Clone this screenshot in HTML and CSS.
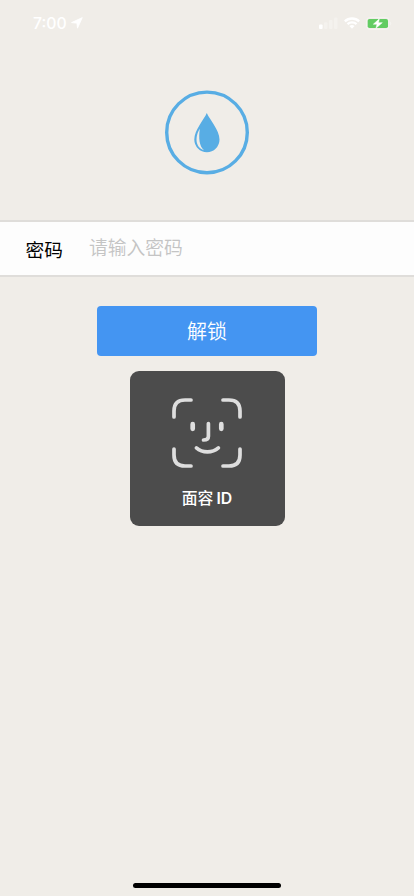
FILE: index.html
```html
<!DOCTYPE html>
<html lang="zh-CN">
<head>
<meta charset="utf-8">
<meta name="viewport" content="width=device-width, initial-scale=1">
<title>解锁</title>
<link rel="stylesheet" href="styles.css">
</head>
<body>
<div class="screen">
  <header class="status">
    <div class="clock"><span>7:00</span>
      <svg class="arrow" width="12" height="12" viewBox="0 0 12 12"><path d="M11.3.6 6.5 11.2 5.9 6.2.5 5.6z" fill="#fff" stroke="#fff" stroke-width=".8" stroke-linejoin="round"/></svg>
    </div>
    <div class="indicators">
      <svg width="19" height="13" viewBox="0 0 19 13" fill="#fff"><rect x="0" y="7.5" width="3.6" height="4.5" rx="1"/><g opacity=".28"><rect x="5" y="5.3" width="3.5" height="6.7" rx="1"/><rect x="10" y="3" width="3.5" height="9" rx="1"/><rect x="15" y="0.4" width="3.5" height="11.6" rx="1"/></g></svg>
      <svg width="16" height="12" viewBox="0 0 16 12" fill="none" stroke="#fff" stroke-width="2.3"><path d="M.8 4.4a10.4 10.4 0 0 1 14.4 0M3.5 7.2a6.5 6.5 0 0 1 9 0"/><path d="M5.4 9.1a3.8 3.8 0 0 1 5.2 0L8 11.7z" fill="#fff" stroke="none"/></svg>
      <svg width="26" height="13" viewBox="0 0 26 13"><rect x=".5" y=".5" width="22.5" height="12" rx="3.4" fill="none" stroke="#fff" stroke-opacity=".35"/><rect x="1.7" y="2" width="20.3" height="9" rx="1.8" fill="#62cc62"/><path d="M24.3 4.5c1.3.5 1.3 3.500 0 4z" fill="#fff" opacity=".5"/><path d="M13.300 1.800 7.300 7.200h3.700L9.900 11.300l6.400-5.600h-3.800z" fill="#fff" stroke="#fff" stroke-width=".5"/></svg>
    </div>
  </header>

  <svg class="logo" width="84" height="84" viewBox="0 0 84 84">
    <circle cx="42" cy="42.400" r="40.300" fill="none" stroke="#58ade4" stroke-width="3.400"/>
    <path d="M41.800 23C39 29.700 29.300 39.800 29.300 49.600a12.600 12.700 0 0 0 25.200 0C54.500 39.800 44.600 29.700 41.800 23z" fill="#58ade4"/>
    <path d="M34.800 38.700C30 46.500 29.800 57 39 60.200 34.200 56 33.500 48 34.800 38.700z" fill="#f0ede8"/>
  </svg>

  <label class="field">
    <span class="field-name">密码</span>
    <input class="field-input" type="password" placeholder="请输入密码">
  </label>

  <button class="unlock" type="button">解锁</button>

  <section class="face">
    <svg width="70" height="70" viewBox="0 0 70 70" fill="none" stroke="#dedede" stroke-width="3.700" stroke-linecap="round" stroke-linejoin="round">
      <path d="M2 19v-6C2 5.500 5.500 2 13 2h6M51 2h6c7.500 0 11 3.500 11 11v6M68 51v6c0 7.500-3.500 11-11 11h-6M19 68h-6C5.500 68 2 64.500 2 57v-6"/>
      <path d="M20.700 26.200v4.600M49.300 26.200v4.600" stroke-width="4.700"/>
      <path d="M36.400 25.600v12.600c0 2.500-1.300 3.800-4.900 3.800M24.400 49.900c6 5.300 15.900 5.300 22 0"/>
    </svg>
    <p class="face-name"><span>面容</span><span class="face-id">ID</span></p>
  </section>

  <div class="home"></div>
</div>
</body>
</html>
```

FILE: styles.css
```css
* {
  box-sizing: border-box;
}

body {
  margin: 0;
  background: #f0ede8;
  font-family: Inter, "Noto Sans CJK SC", sans-serif;
}

.screen {
  display: flex;
  flex-direction: column;
  align-items: center;
  height: 896px;
  overflow: hidden;
}

.status {
  display: flex;
  flex: none;
  justify-content: space-between;
  align-items: center;
  width: 100%;
  height: 46px;
  padding: 0 22px 0 33px;
  color: #fff;
}

.clock {
  display: flex;
  align-items: center;
  gap: 4px;
  font-size: 15.800px;
  font-weight: 500;
  line-height: 20px;
}

.clock span {
  padding-top: 1px;
}

.arrow {
  margin-top: -1px;
}

.indicators {
  display: flex;
  align-items: center;
  gap: 6px;
}

.logo {
  flex: none;
  overflow: visible;
  margin-top: 44px;
}

.field {
  display: flex;
  flex: none;
  align-items: center;
  width: 100%;
  height: 57px;
  margin-top: 46px;
  padding-left: 25.500px;
  background: #fdfdfd;
  border-top: 2px solid #dfddda;
  border-bottom: 2px solid #dfddda;
}

.field-name {
  width: 63.500px;
  color: #000;
  font: 400 18.700px/28px "Noto Sans CJK SC", sans-serif;
}

.field-input {
  flex: 1;
  height: 28px;
  margin-bottom: 3px;
  padding: 0;
  border: 0;
  outline: 0;
  background: transparent;
  font: 350 18.800px/28px "Noto Sans CJK SC", sans-serif;
}

.field-input::placeholder {
  color: #c4c4c4;
  opacity: 1;
}

.unlock {
  flex: none;
  width: 220px;
  height: 50px;
  margin-top: 29px;
  padding: 0;
  border: 0;
  border-radius: 4px;
  background: #4495f2;
  color: #fff;
  font: 350 20px/50px "Noto Sans CJK SC", sans-serif;
}

.face {
  display: flex;
  flex: none;
  flex-direction: column;
  align-items: center;
  width: 155px;
  height: 155px;
  margin-top: 15px;
  padding-top: 27px;
  border-radius: 9px;
  background: #4c4c4c;
}

.face-name {
  display: flex;
  gap: 3px;
  margin: 18.500px 0 0;
  color: #fff;
  font-size: 15.800px;
  font-weight: 500;
  line-height: 24px;
}

.face-id {
  font-weight: 600;
}

.home {
  flex: none;
  width: 148px;
  height: 5px;
  margin: auto 0 8.500px;
  border-radius: 3px;
  background: #000;
}
```
